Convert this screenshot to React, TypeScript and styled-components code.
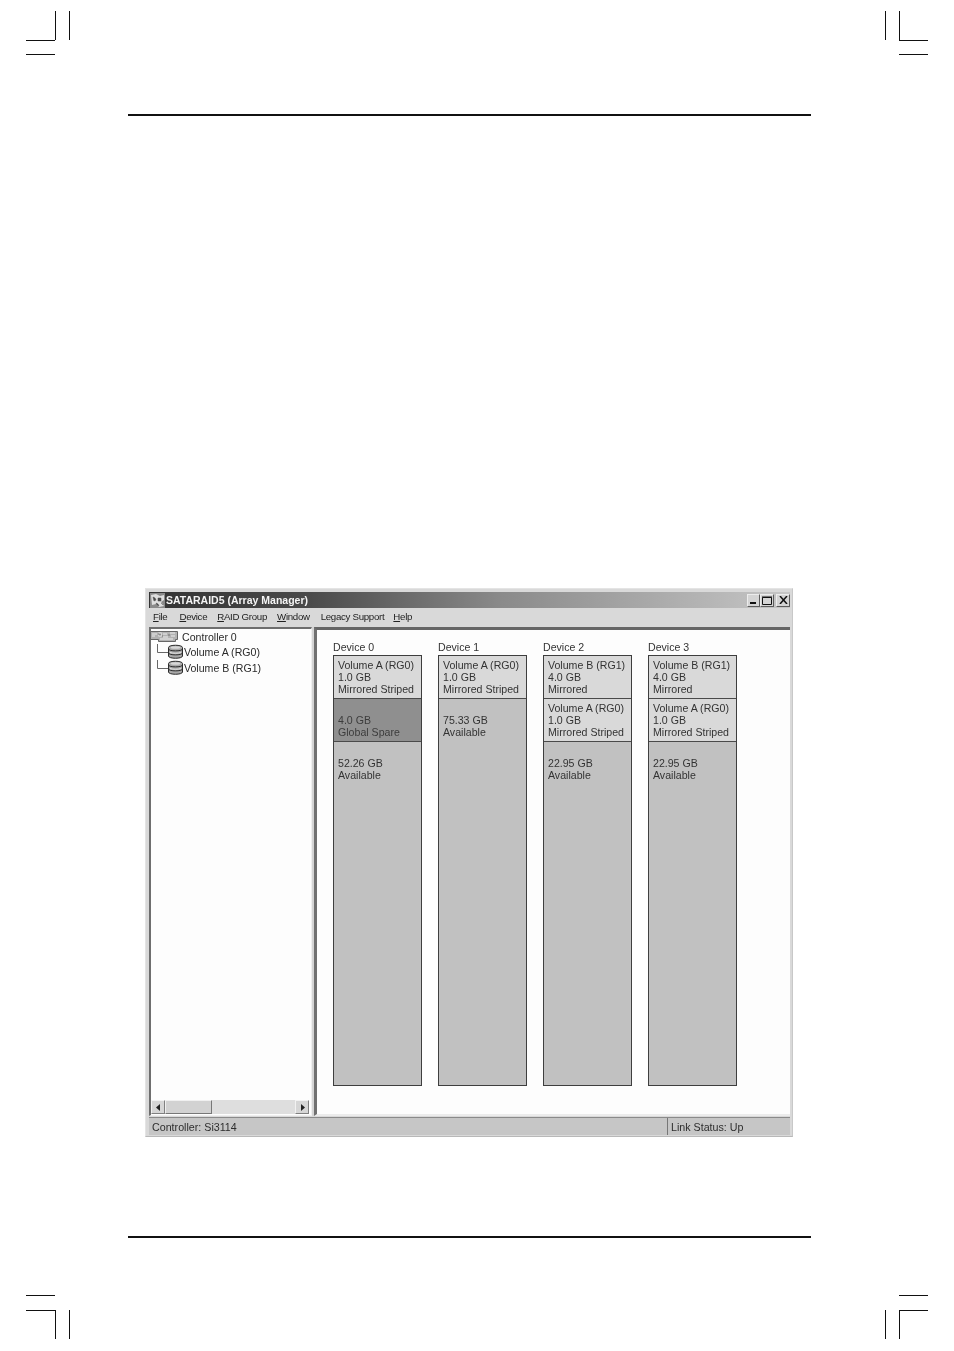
import React from 'react';
import styled, { createGlobalStyle } from 'styled-components';

const GlobalStyle = createGlobalStyle`
  html, body {
    margin: 0;
    padding: 0;
    background: #fff;
  }
`

const Page = styled.div`
  width: 954px;
  height: 1351px;
  overflow: hidden;
  box-sizing: border-box;
  padding-top: 11px;
  display: flex;
  flex-direction: column;
  font-family: "Liberation Sans", Arial, sans-serif;
`

const MarkRow = styled.div<{ $top?: number }>`
  display: flex;
  justify-content: space-between;
  height: 45px;
  margin: ${({ $top }) => $top || 0}px 25px 0 26px;
`

const Rule = styled.div<{ $top: number }>`
  height: 2px;
  background: #111;
  margin: ${({ $top }) => $top}px 143px 0 128px;
`

const Window = styled.div`
  box-sizing: border-box;
  width: 648px;
  height: 549px;
  margin: 472px 0 0 145px;
  padding: 3px 2px 1px 3px;
  background: #d9d9d9;
  border: 1px solid #e4e4e4;
  border-right-color: #c8c8c8;
  border-bottom-color: #b8b8b8;
  display: flex;
  flex-direction: column;
  filter: blur(0.45px);
`

const TitleBar = styled.div`
  height: 16px;
  flex: none;
  display: flex;
  align-items: center;
  padding-left: 1px;
  margin-bottom: 1px;
  background: linear-gradient(to right, #333 0%, #4a4a4a 25%, #8a8a8a 55%, #c6c6c6 100%);
`

const TitleText = styled.span`
  margin-left: 1px;
  font-size: 10.5px;
  font-weight: bold;
  color: #f4f4f4;
  flex: 1;
  white-space: nowrap;
`

const WinButton = styled.div<{ $gap?: number; $width: number }>`
  box-sizing: border-box;
  width: ${({ $width }) => $width}px;
  height: 13px;
  margin-left: ${({ $gap }) => $gap || 0}px;
  background: #d4d4d4;
  border: 1px solid;
  border-color: #ececec #5c5c5c #5c5c5c #ececec;
  display: flex;
  align-items: center;
  justify-content: center;
`

const MenuBar = styled.div`
  box-sizing: border-box;
  height: 16px;
  flex: none;
  display: flex;
  align-items: center;
  padding: 0 0 1px 4px;
  font-size: 9.7px;
  letter-spacing: -0.3px;
  color: #222;
`

const MenuItem = styled.span<{ $gap: number }>`
  margin-right: ${({ $gap }) => $gap}px;
  white-space: nowrap;

  u {
    text-decoration-thickness: 1px;
    text-underline-offset: 1px;
  }
`

const Panes = styled.div`
  flex: 1;
  min-height: 0;
  display: flex;
  margin-top: 2px;
`

const TreePane = styled.div`
  box-sizing: border-box;
  width: 163px;
  flex: none;
  background: #fdfdfd;
  border-left: 2px solid #6e6e6e;
  border-top: 2px solid #6e6e6e;
  border-right: 1px solid #efefef;
  border-bottom: 1px solid #efefef;
  display: flex;
  flex-direction: column;
`

const Tree = styled.div`
  flex: 1;
  font-size: 10.6px;
  color: #2a2a2a;
`

const TreeRow = styled.div<{ $height: number }>`
  display: flex;
  align-items: center;
  height: ${({ $height }) => $height}px;
  white-space: nowrap;
`

const TreeIndent = styled.span`
  width: 5px;
  flex: none;
`

const RootLabel = styled.span`
  margin-left: 4px;
`

const RootIcon = styled.svg`
  margin-left: -1px;
  flex: none;
`

const ScrollBar = styled.div`
  height: 14px;
  flex: none;
  display: flex;
  margin: 0 2px 1px 0;
  background: #dedede;
`

const ScrollButton = styled.div`
  box-sizing: border-box;
  width: 14px;
  flex: none;
  background: #d6d6d6;
  border: 1px solid;
  border-color: #f2f2f2 #808080 #808080 #f2f2f2;
  display: flex;
  align-items: center;
  justify-content: center;
`

const ScrollThumb = styled.div`
  box-sizing: border-box;
  width: 47px;
  flex: none;
  background: #d2d2d2;
  border: 1px solid;
  border-color: #f0f0f0 #777 #777 #f0f0f0;
`

const ScrollTrack = styled.div`
  flex: 1;
`

const Splitter = styled.div`
  width: 2px;
  flex: none;
  background: #d4d4d4;
`

const DevicePane = styled.div`
  flex: 1;
  box-sizing: border-box;
  background: #fdfdfd;
  border-left: 3px solid #707070;
  border-top: 3px solid #666;
  border-bottom: 2px solid #ececec;
  padding: 11px 0 0 16px;
  display: flex;
  gap: 16px;
  align-items: flex-start;
  color: #333;
  font-size: 10.6px;
`

const DeviceColumn = styled.div`
  width: 89px;
  display: flex;
  flex-direction: column;
`

const DeviceName = styled.div`
  height: 14px;
  line-height: 12px;
  white-space: nowrap;
`

const SegmentStack = styled.div`
  box-sizing: border-box;
  height: 431px;
  border: 1px solid #3e3e3e;
  display: flex;
  flex-direction: column;
`

const Segment = styled.div<{ $kind: 'volume' | 'spare' | 'free'; $grow?: boolean }>`
  box-sizing: border-box;
  height: ${({ $grow }) => ($grow ? 'auto' : '43px')};
  flex: ${({ $grow }) => ($grow ? 1 : 'none')};
  padding: 3px 0 0 4px;
  line-height: 12px;
  white-space: nowrap;
  border-bottom: ${({ $grow }) => ($grow ? 'none' : '1px solid #4a4a4a')};
  background: ${({ $kind }) =>
    $kind === 'volume' ? '#d9d9d9' : $kind === 'spare' ? '#8f8f8f' : '#c1c1c1'};
  color: ${({ $kind }) => ($kind === 'spare' ? '#3c3c3c' : '#333')};
`

const StatusBar = styled.div`
  height: 17px;
  flex: none;
  display: flex;
  margin-top: 1px;
  font-size: 10.7px;
  color: #2e2e2e;
  background: #c6c6c6;
  border-top: 1px solid #8a8a8a;
`

const StatusCell = styled.div<{ $width?: number }>`
  box-sizing: border-box;
  ${({ $width }) => ($width ? `width: ${$width}px; flex: none; border-left: 1px solid #777;` : 'flex: 1;')}
  padding-left: 3px;
  line-height: 18px;
  white-space: nowrap;
`

const ControllerIcon = () => (
  <RootIcon width="28" height="13" viewBox="0 0 28 13">
    <path d="M.5 1.500h27v8h-2v2h-17v-2h-8z" fill="#b2b2b2" stroke="#666" />
    <path d="M2 4h5M2 6h3M9 3h2v3H9zM13 4h4M13 7h5M20 3h5M21 6h4M10 9h13" stroke="#ececec" strokeWidth="1.2" />
    <path d="M8 4h1M12 6h1M18 5h2" stroke="#707070" />
  </RootIcon>
)

const DiskIcon = ({ first }: { first?: boolean }) => (
  <svg width="28" height="16" viewBox="0 0 28 16">
    <path d={first ? 'M1.500 -5V8.500H12' : 'M1.500 -8V8.500H12'} fill="none" stroke="#666" />
    <path d="M12.500 3.500c0-3 14-3 14 0v8.500c0 3-14 3-14 0z" fill="#a8a8a8" stroke="#2c2c2c" />
    <ellipse cx="19.500" cy="3.500" rx="5" ry="1.300" fill="#d8d8d8" />
    <path d="M12.500 5c0 2.500 14 2.500 14 0M12.500 9c0 2.500 14 2.500 14 0" fill="none" stroke="#2c2c2c" />
    <path d="M14 8.500c3 1 8 1 11 0" fill="none" stroke="#e4e4e4" />
  </svg>
)

const AppIcon = () => (
  <svg width="15" height="15" viewBox="0 0 15 15">
    <rect width="15" height="15" fill="#8a8a8a" />
    <path d="M1 2l5-1 4 2 4-1v5l-3 2 3 4-5 1-3-3-4 1z" fill="#dedede" />
    <path d="M3 4l2 1 1 2-2 1zM8 5h3v3H8zM6 10l2 1 1 2-2-1zM11 10l2 2" fill="#4a4a4a" stroke="#4a4a4a" strokeWidth="0.5" />
  </svg>
)

const cropPaths = {
  tl: 'M29.500 0V29M0 29.500H29M43.500 0V29M0 43.500H29',
  tr: 'M.5 0V29M14.500 0V29M14 29.500H43M14 43.500H43',
  bl: 'M0 .5H29M0 15.500H29M29.500 15V44M43.500 15V44',
  br: 'M14 .5H43M14 15.500H43M14.500 15V44M.5 15V44',
}

const CropMark = ({ corner }: { corner: keyof typeof cropPaths }) => (
  <svg width="44" height="45" viewBox="0 0 44 45">
    <path d={cropPaths[corner]} fill="none" stroke="#111" strokeWidth="1" />
  </svg>
)

const menus = [
  { key: 'F', rest: 'ile', gap: 12 },
  { key: 'D', rest: 'evice', gap: 10 },
  { key: 'R', rest: 'AID Group', gap: 10 },
  { key: 'W', rest: 'indow', gap: 11 },
  { key: '', rest: 'Legacy Support', gap: 9 },
  { key: 'H', rest: 'elp', gap: 0 },
]

const volA = ['Volume A (RG0)', '1.0 GB', 'Mirrored Striped']
const volB = ['Volume B (RG1)', '4.0 GB', 'Mirrored']

const devices = [
  { name: 'Device 0', segments: [volA, ['', '4.0 GB', 'Global Spare']], free: '52.26 GB' },
  { name: 'Device 1', segments: [volA], free: '75.33 GB' },
  { name: 'Device 2', segments: [volB, volA], free: '22.95 GB' },
  { name: 'Device 3', segments: [volB, volA], free: '22.95 GB' },
]

const Lines = ({ lines }: { lines: string[] }) => (
  <>
    {lines.map((line, i) => (
      <div key={i}>{line || '\u00a0'}</div>
    ))}
  </>
)

export default function App() {
  return (
    <Page>
      <GlobalStyle />
      <MarkRow>
        <CropMark corner="tl" />
        <CropMark corner="tr" />
      </MarkRow>
      <Rule $top={58} />
      <Window>
        <TitleBar>
          <AppIcon />
          <TitleText>SATARAID5 (Array Manager)</TitleText>
          <WinButton $width={13}>
            <svg width="8" height="8" viewBox="0 0 8 8"><path d="M0 7h6" stroke="#111" strokeWidth="2" /></svg>
          </WinButton>
          <WinButton $width={14}>
            <svg width="10" height="9" viewBox="0 0 10 9"><path d="M.5 1.500h9v7h-9zM0 1h10" fill="none" stroke="#111" /></svg>
          </WinButton>
          <WinButton $width={14} $gap={2}>
            <svg width="9" height="8" viewBox="0 0 9 8"><path d="M1 0l7 8M8 0L1 8" stroke="#111" strokeWidth="1.5" /></svg>
          </WinButton>
        </TitleBar>
        <MenuBar>
          {menus.map((m) => (
            <MenuItem key={m.rest} $gap={m.gap}>
              <u>{m.key}</u>
              {m.rest}
            </MenuItem>
          ))}
        </MenuBar>
        <Panes>
          <TreePane>
            <Tree>
              <TreeRow $height={15}>
                <ControllerIcon />
                <RootLabel>Controller 0</RootLabel>
              </TreeRow>
              <TreeRow $height={16}>
                <TreeIndent />
                <DiskIcon first />
                Volume A (RG0)
              </TreeRow>
              <TreeRow $height={16}>
                <TreeIndent />
                <DiskIcon />
                Volume B (RG1)
              </TreeRow>
            </Tree>
            <ScrollBar>
              <ScrollButton>
                <svg width="5" height="7" viewBox="0 0 5 7"><path d="M4 0v7L0 3.500z" fill="#222" /></svg>
              </ScrollButton>
              <ScrollThumb />
              <ScrollTrack />
              <ScrollButton>
                <svg width="5" height="7" viewBox="0 0 5 7"><path d="M1 0v7l4-3.500z" fill="#222" /></svg>
              </ScrollButton>
            </ScrollBar>
          </TreePane>
          <Splitter />
          <DevicePane>
            {devices.map((d) => (
              <DeviceColumn key={d.name}>
                <DeviceName>{d.name}</DeviceName>
                <SegmentStack>
                  {d.segments.map((lines, i) => (
                    <Segment key={i} $kind={lines[0] ? 'volume' : 'spare'}>
                      <Lines lines={lines} />
                    </Segment>
                  ))}
                  <Segment $kind="free" $grow>
                    <Lines lines={['', d.free, 'Available']} />
                  </Segment>
                </SegmentStack>
              </DeviceColumn>
            ))}
          </DevicePane>
        </Panes>
        <StatusBar>
          <StatusCell>Controller: Si3114</StatusCell>
          <StatusCell $width={123}>Link Status: Up</StatusCell>
        </StatusBar>
      </Window>
      <Rule $top={99} />
      <MarkRow $top={57}>
        <CropMark corner="bl" />
        <CropMark corner="br" />
      </MarkRow>
    </Page>
  );
}
